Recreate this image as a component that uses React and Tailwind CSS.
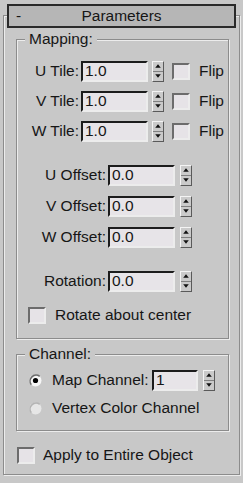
import React from 'react';

// 3ds Max style "Parameters" rollout

const Spinner = ({ className = '' }) => (
  <div
    className={`flex flex-col w-[12px] h-[21px] bg-[#cacaca] border border-t-[#f4f4f4] border-l-[#f4f4f4] border-r-[#5a5a5a] border-b-[#5a5a5a] ${className}`}
  >
    <div className="flex-1 flex items-center justify-center border-b border-b-[#808080]">
      <svg width="6" height="4" viewBox="0 0 6 4">
        <path d="M3 0.3L5.8 3.7H0.2Z" fill="#111" />
      </svg>
    </div>
    <div className="flex-1 flex items-center justify-center">
      <svg width="6" height="4" viewBox="0 0 6 4">
        <path d="M0.2 0.3H5.8L3 3.7Z" fill="#111" />
      </svg>
    </div>
  </div>
);

const NumField = ({ value, className = '' }) => (
  <div
    className={`h-[21px] flex items-center pl-[2px] bg-[#e7e4e8] border-2 border-t-[#1c1c1c] border-l-[#1c1c1c] border-r-[#ececec] border-b-[#ececec] ${className}`}
  >
    {value}
  </div>
);

const CheckBox = ({ className = '' }) => (
  <div
    className={`shrink-0 w-[18px] h-[17px] bg-[#e6e3e7] border-2 border-t-[#6c6c6c] border-l-[#6c6c6c] border-r-[#ececec] border-b-[#ececec] ${className}`}
  />
);

const Radio = ({ checked, className = '' }) => (
  <svg width="13" height="13" viewBox="0 0 13 13" className={`shrink-0 ${className}`}>
    <circle cx="6.5" cy="6.5" r="6" fill={checked ? '#f6f6f6' : '#e6e6e6'} />
    <path
      d="M2.3 10.7A6 6 0 0 1 10.7 2.3"
      stroke={checked ? '#6e6e6e' : '#b4b4b4'}
      strokeWidth="1.5"
      fill="none"
    />
    {checked && <circle cx="6.5" cy="6.5" r="2.6" fill="#000" />}
  </svg>
);

const Group = ({ label, className = '', children }) => (
  <div className={`relative flex flex-col border border-[#8c8c8c] shadow-[inset_1px_1px_0_#ececec,1px_1px_0_#ececec] ${className}`}>
    <span className="absolute -top-[10px] left-[8px] px-[4px] bg-[#c8c8c8] leading-[18px]">
      {label}
    </span>
    {children}
  </div>
);

export default function App() {
  const tiles = ['U', 'V', 'W'];

  return (
    <div className="w-[243px] h-[483px] overflow-hidden bg-[#c8c8c8] pt-[4px] text-[#161616] font-['Liberation_Sans',Arial,sans-serif] text-[15.5px] leading-[18px]">
      {/* rollout title */}
      <div className="relative z-10 mx-[7px] h-[24px] grid grid-cols-[20px_1fr_20px] items-center px-[7px] bg-[#b6b6b6] border-2 border-[#2a2a2a]">
        <span>-</span>
        <span className="text-center">Parameters</span>
        <span />
      </div>

      {/* rollout frame */}
      <div className="-mt-[13px] mx-[3px] h-[460px] flex flex-col pl-[12px] pr-[10px] border border-[#8c8c8c] shadow-[inset_1px_1px_0_#ececec,1px_1px_0_#ececec]">
        <Group label="Mapping:" className="mt-[23px] pt-[20px] pb-[12px]">
          <div className="flex flex-col gap-[8px]">
            {tiles.map((a) => (
              <div key={a} className="flex items-center h-[22px]">
                <span className="w-[62px] text-right whitespace-nowrap">{a} Tile:</span>
                <NumField value="1.0" className="ml-[2px] w-[67px]" />
                <Spinner className="ml-[4px]" />
                <CheckBox className="ml-[8px]" />
                <span className="ml-[9px]">Flip</span>
              </div>
            ))}
          </div>

          <div className="flex flex-col gap-[9px] mt-[22px]">
            {tiles.map((a) => (
              <div key={a} className="flex items-center h-[22px]">
                <span className="w-[89px] text-right whitespace-nowrap">{a} Offset:</span>
                <NumField value="0.0" className="ml-[2px] w-[67px]" />
                <Spinner className="ml-[5px]" />
              </div>
            ))}
          </div>

          <div className="flex items-center h-[22px] mt-[22px]">
            <span className="w-[89px] text-right">Rotation:</span>
            <NumField value="0.0" className="ml-[2px] w-[67px]" />
            <Spinner className="ml-[5px]" />
          </div>

          <div className="flex items-center h-[22px] mt-[12px] pl-[11px]">
            <CheckBox />
            <span className="ml-[9px] whitespace-nowrap">Rotate about center</span>
          </div>
        </Group>

        <Group label="Channel:" className="mt-[15px] pt-[14px] pb-[11px] gap-[6px]">
          <div className="flex items-center h-[22px] pl-[12px]">
            <Radio checked />
            <span className="w-[110px] pl-[10px] whitespace-nowrap">Map Channel:</span>
            <NumField value="1" className="w-[46px]" />
            <Spinner className="ml-[5px]" />
          </div>
          <div className="flex items-center h-[22px] pl-[12px]">
            <Radio />
            <span className="pl-[10px] whitespace-nowrap">Vertex Color Channel</span>
          </div>
        </Group>

        <div className="flex items-center h-[22px] mt-[13px] pl-[1px]">
          <CheckBox />
          <span className="ml-[8px] whitespace-nowrap">Apply to Entire Object</span>
        </div>
      </div>
    </div>
  );
}
